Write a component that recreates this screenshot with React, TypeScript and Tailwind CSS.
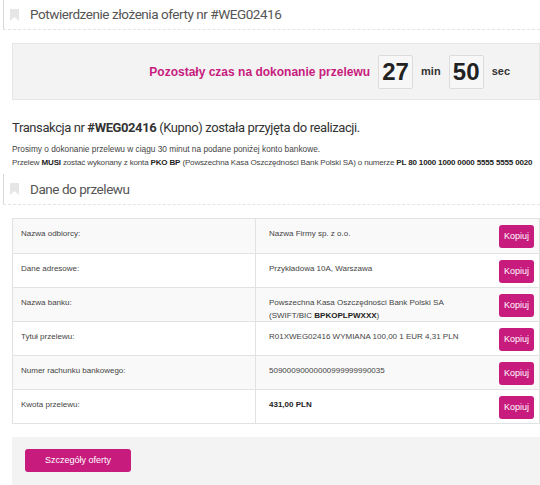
import React from "react";

const Bookmark = () => (
  <svg width="9" height="12" viewBox="0 0 9 12" className="shrink-0">
    <path d="M0 0H9V12L4.5 8L0 12Z" fill="#e6e6e6" />
  </svg>
);

const rows: { label: string; value: React.ReactNode }[] = [
  { label: "Nazwa odbiorcy:", value: "Nazwa Firmy sp. z o.o." },
  { label: "Dane adresowe:", value: "Przykładowa 10A, Warszawa" },
  {
    label: "Nazwa banku:",
    value: (
      <>
        Powszechna Kasa Oszczędności Bank Polski SA
        <br />
        (SWIFT/BIC <b className="font-bold text-[#222]">BPKOPLPWXXX</b>)
      </>
    ),
  },
  { label: "Tytuł przelewu:", value: "R01XWEG02416 WYMIANA 100,00 1 EUR 4,31 PLN" },
  { label: "Numer rachunku bankowego:", value: "50900090000000999999990035" },
  { label: "Kwota przelewu:", value: <b className="font-bold text-[#222]">431,00 PLN</b> },
];

export default function App() {
  return (
    <div className="w-[540px] h-[485px] overflow-hidden bg-white font-['Liberation_Sans',Arial,sans-serif]">
      <div
        className="ml-[3px] h-[30px] border-l border-b border-l-[#d8d8d8] border-b-[#e4e4e4] flex items-center pl-[6px] gap-[11px]"
        style={{ borderLeftStyle: "solid", borderBottomStyle: "dashed" }}
      >
        <Bookmark />
        <span className="font-['Roboto',sans-serif] text-[13.5px] tracking-[-0.45px] text-[#555]">
          Potwierdzenie złożenia oferty nr #WEG02416
        </span>
      </div>

      <div className="ml-[12px] mt-[13px] h-[57px] bg-[#f3f3f3] border border-[#e6e6e6] flex items-center justify-end pr-[29px]">
        <span className="text-[#c71c7e] font-bold text-[12px] mr-[8px]">Pozostały czas na dokonanie przelewu</span>
        <span className="w-[35px] h-[34px] bg-[#f7f7f7] border border-[#dcdcdc] rounded-[2px] flex items-center justify-center text-[24px] font-bold text-[#222]">27</span>
        <span className="text-[11px] font-bold text-[#333] mx-[8px]">min</span>
        <span className="w-[35px] h-[34px] bg-[#f7f7f7] border border-[#dcdcdc] rounded-[2px] flex items-center justify-center text-[24px] font-bold text-[#222]">50</span>
        <span className="text-[11px] font-bold text-[#333] ml-[8px]">sec</span>
      </div>

      <div className="ml-[12px] mt-[19px] font-['Roboto',sans-serif] text-[13px] tracking-[-0.4px] leading-[18px] text-[#333]">
        Transakcja nr <b className="font-bold">#WEG02416</b> (Kupno) została przyjęta do realizacji.
      </div>
      <div className="ml-[12px] mt-[6px] leading-[13px] text-[#444] whitespace-nowrap">
        <div className="text-[8.3px]">Prosimy o dokonanie przelewu w ciągu 30 minut na podane poniżej konto bankowe.</div>
        <div className="text-[8px] tracking-[-0.15px]">
          Przelew <b className="text-[#222]">MUSI</b> zostać wykonany z konta <b className="text-[#222]">PKO BP</b> (Powszechna Kasa Oszczędności Bank Polski SA) o numerze <b className="text-[#222]">PL 80 1000 1000 0000 5555 5555 0020</b>
        </div>
      </div>

      <div
        className="ml-[3px] mt-[5px] h-[31px] border-l border-b border-l-[#d8d8d8] border-b-[#e4e4e4] flex items-center pl-[6px] gap-[11px]"
        style={{ borderLeftStyle: "solid", borderBottomStyle: "dashed" }}
      >
        <Bookmark />
        <span className="font-['Roboto',sans-serif] text-[13.5px] tracking-[-0.45px] text-[#555]">Dane do przelewu</span>
      </div>

      <div className="ml-[12px] mt-[13px] border border-[#e2e2e2] text-[8px] text-[#444]">
        {rows.map((r, i) => (
          <div
            key={i}
            className={`flex h-[34px] ${i > 0 ? "border-t border-[#e2e2e2]" : ""} ${i % 2 === 0 ? "bg-[#f9f9f9]" : "bg-white"}`}
          >
            <div className="w-[243px] border-r border-[#e2e2e2] pl-[8px] pt-[9px]">{r.label}</div>
            <div className="flex-1 pl-[13px] pt-[8px] leading-[13px] whitespace-nowrap">{r.value}</div>
            <div className="pr-[5px] pt-[6px]">
              <span className="flex items-center justify-center w-[35px] h-[23px] rounded-[3px] bg-[#c71c7e] text-white text-[9px]">Kopiuj</span>
            </div>
          </div>
        ))}
      </div>

      <div className="ml-[12px] mt-[13px] h-[60px] bg-[#f3f3f3] pl-[13px] pt-[12px]">
        <span className="flex items-center justify-center w-[106px] h-[23px] rounded-[3px] bg-[#c71c7e] text-white text-[9px]">Szczegóły oferty</span>
      </div>
    </div>
  );
}
